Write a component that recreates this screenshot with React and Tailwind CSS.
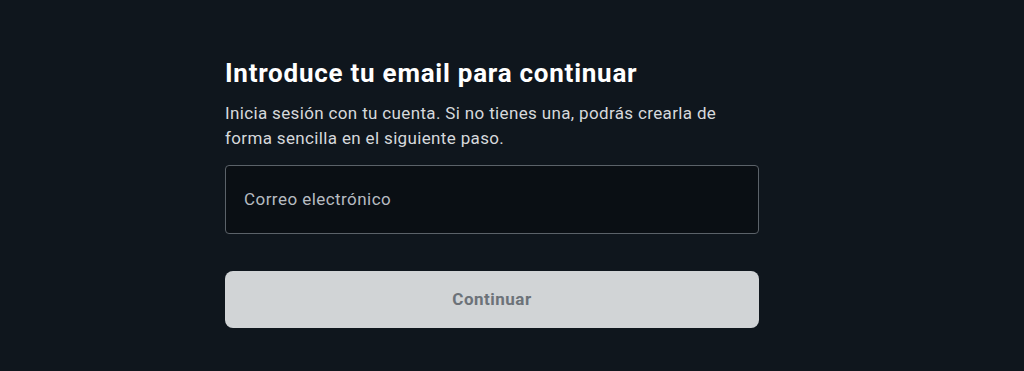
export default function App() {
  return (
    <div className="min-h-[371px] w-full bg-[#0f161d]" style={{ fontFamily: 'Roboto, "Liberation Sans", sans-serif' }}>
      <div className="w-[534px] ml-[225px] pt-[57px] flex flex-col">
        <h1 className="text-[26px] leading-[32px] font-bold text-white tracking-[0.75px]">Introduce tu email para continuar</h1>
        <p className="mt-[12px] text-[17px] leading-[25px] text-[#d6d9dc] tracking-[0.35px]">
          Inicia sesión con tu cuenta. Si no tienes una, podrás crearla de<br />forma sencilla en el siguiente paso.
        </p>
        <div className="mt-[14px] h-[69px] rounded-[4px] border border-[#5b6269] bg-[#0a0f14] flex items-center px-[18px]">
          <span className="text-[17px] text-[#b7bcc1] tracking-[0.45px]">Correo electrónico</span>
        </div>
        <button className="mt-[37px] h-[57px] rounded-[8px] bg-[#d1d4d6] text-[17px] font-bold text-[#6c7279] tracking-[0.5px]">Continuar</button>
      </div>
    </div>
  );
}
